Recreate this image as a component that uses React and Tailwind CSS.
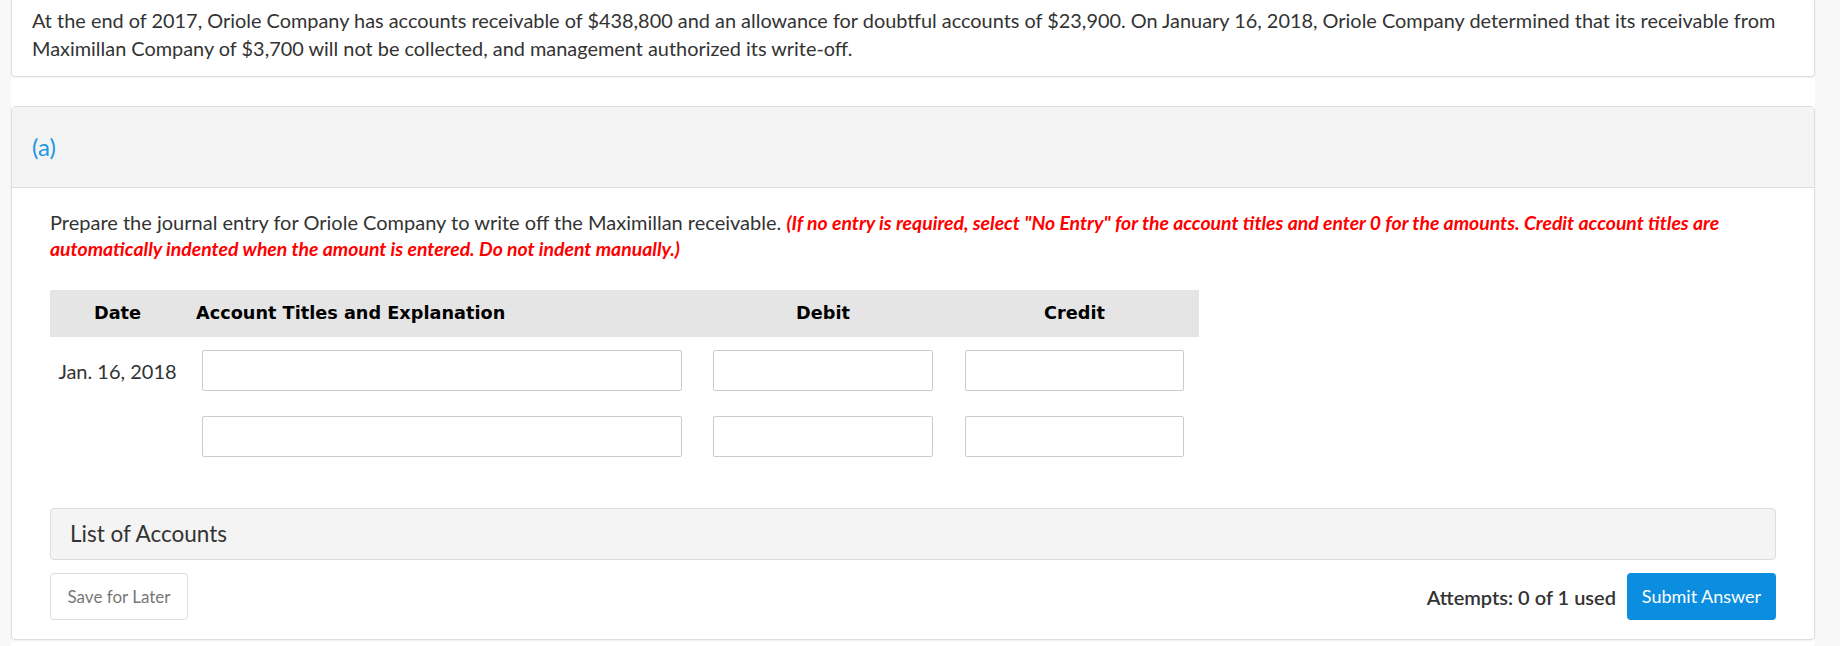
import React from "react";

const lato = { fontFamily: "Lato, 'Open Sans', sans-serif" };

const Input = ({ className }) => (
  <input
    type="text"
    className={`h-[41px] rounded-[2px] border border-[#cccccc] bg-white ${className}`}
  />
);

export default function App() {
  return (
    <div style={lato} className="min-h-[646px] w-[1840px] bg-[#f8f8f8] text-[#333333]">
      <div className="ml-[11px] w-[1804px] min-h-[646px] bg-white">
        <div className="rounded-b-[4px] border border-t-0 border-[#dddddd] px-[20px] pt-[6px] pb-[14px] shadow-[0_1px_2px_rgba(0,0,0,0.06)]">
          <p className="text-[19.9px] leading-[28px]">
            At the end of 2017, Oriole Company has accounts receivable of $438,800 and an allowance for doubtful accounts of $23,900. On January 16, 2018, Oriole Company determined that its receivable from Maximillan Company of $3,700 will not be collected, and management authorized its write-off.
          </p>
        </div>

        <div className="mt-[29px] rounded-[4px] border border-[#dddddd] shadow-[0_1px_2px_rgba(0,0,0,0.06)]">
          <div className="flex h-[81px] items-center border-b border-[#dddddd] bg-[#f4f4f4] px-[20px]">
            <span className="text-[24px] text-[#2196e3]">(a)</span>
          </div>

          <div className="px-[38px] pt-[21px] pb-[19px]">
            <p className="text-[20px] leading-[26px]">
              Prepare the journal entry for Oriole Company to write off the Maximillan receivable.{" "}
              <span className="text-[19.4px] leading-[1] font-bold italic text-[#ff0000]">
                (If no entry is required, select "No Entry" for the account titles and enter 0 for the amounts. Credit account titles are automatically indented when the amount is entered. Do not indent manually.)
              </span>
            </p>

            <div className="mt-[29px] w-[1149px]">
              <div
                className="grid h-[47px] grid-cols-[135px_512px_252px_250px] items-center bg-[#e5e5e5] text-[17.7px] font-bold text-black"
                style={{ fontFamily: "'DejaVu Sans', Verdana, sans-serif" }}
              >
                <div className="text-center">Date</div>
                <div className="pl-[11px]">Account Titles and Explanation</div>
                <div className="pl-[16px] text-center">
                  <div className="w-[220px]">Debit</div>
                </div>
                <div className="pl-[16px] text-center">
                  <div className="w-[219px]">Credit</div>
                </div>
              </div>

              <div className="mt-[13px] grid grid-cols-[135px_512px_252px_250px] items-center">
                <div className="text-center text-[20px]">Jan. 16, 2018</div>
                <div className="pl-[17px]">
                  <Input className="w-[480px]" />
                </div>
                <div className="pl-[16px]">
                  <Input className="w-[220px]" />
                </div>
                <div className="pl-[16px]">
                  <Input className="w-[219px]" />
                </div>
              </div>

              <div className="mt-[25px] grid grid-cols-[135px_512px_252px_250px] items-center">
                <div></div>
                <div className="pl-[17px]">
                  <Input className="w-[480px]" />
                </div>
                <div className="pl-[16px]">
                  <Input className="w-[220px]" />
                </div>
                <div className="pl-[16px]">
                  <Input className="w-[219px]" />
                </div>
              </div>
            </div>

            <div className="mt-[51px] flex h-[52px] items-center rounded-[4px] border border-[#dddddd] bg-[#f4f4f4] px-[19px]">
              <span className="text-[22.5px] text-[#333333]">List of Accounts</span>
            </div>

            <div className="mt-[13px] flex items-center justify-between">
              <button className="h-[47px] w-[138px] rounded-[4px] border border-[#dddddd] bg-white text-[17px] text-[#777777]">
                Save for Later
              </button>
              <div className="flex items-center gap-[11px]">
                <span className="text-[20px] font-semibold text-[#333333]">Attempts: 0 of 1 used</span>
                <button className="h-[47px] w-[149px] rounded-[4px] bg-[#0b8ee0] text-[18px] text-white">
                  Submit Answer
                </button>
              </div>
            </div>
          </div>
        </div>
      </div>
    </div>
  );
}
